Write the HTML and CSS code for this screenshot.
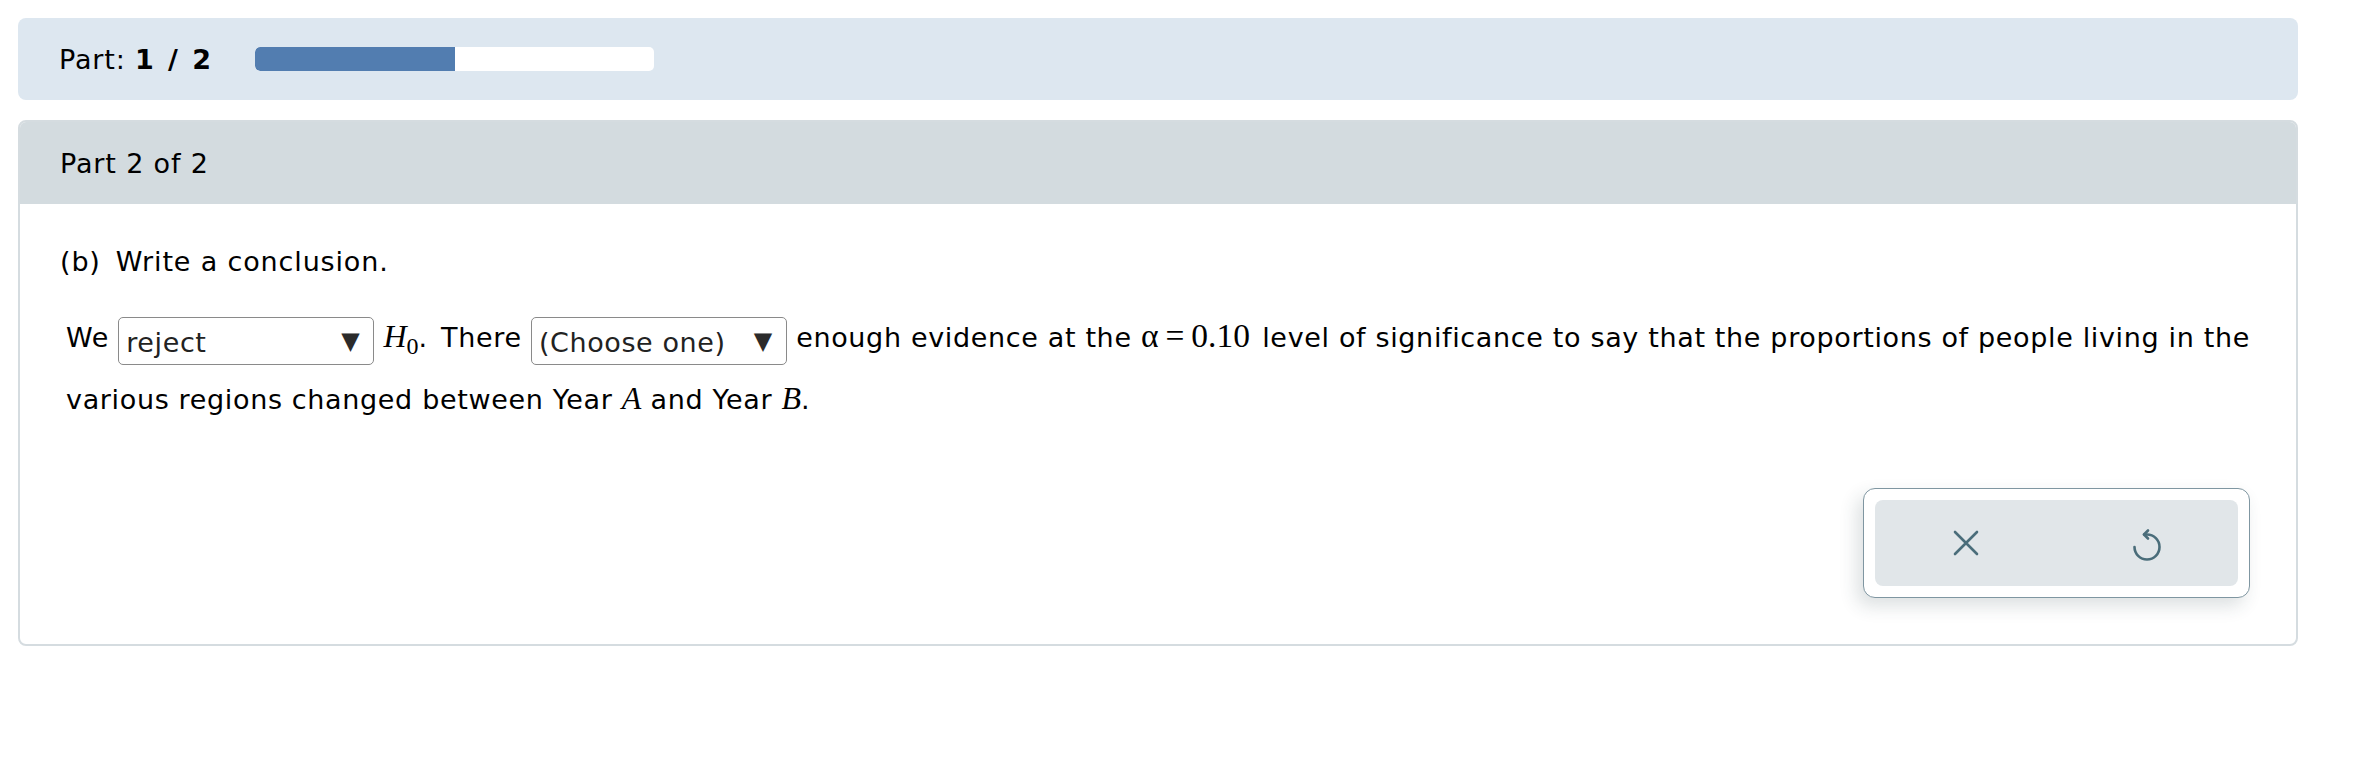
FILE: index.html
```html
<!DOCTYPE html>
<html lang="en">
<head>
<meta charset="utf-8">
<title>Part 2 of 2</title>
<link rel="stylesheet" href="styles.css">
</head>
<body>
<div class="page">
  <div class="progress-card">
    <span class="part-label">Part: <b>1 / 2</b></span>
    <div class="progress"><div class="progress-fill" style="width:50%"></div></div>
  </div>

  <div class="card">
    <div class="card-header">Part 2 of 2</div>
    <div class="card-body">
      <p class="prompt"><span class="prompt-label">(b)</span>Write a conclusion.</p>
      <p class="answer">We <span class="select"><span class="select-text">reject</span><span class="select-arrow">▼</span></span> <span class="math"><i>H</i><sub>0</sub></span><span class="punct">.</span> There <span class="select"><span class="select-text">(Choose one)</span><span class="select-arrow">▼</span></span> enough evidence at the <span class="math math-lg">α<span class="eq">=</span>0.10</span> level of significance to say that the proportions of people living in the various regions changed between Year <span class="math"><i>A</i></span> and Year <span class="math"><i>B</i></span>.</p>
      <div class="actions">
        <div class="btn-group">
          <button class="icon-btn" type="button" aria-label="Clear">
            <svg width="26" height="26" viewBox="0 0 26 26" fill="none" stroke="currentColor" stroke-width="2.6" stroke-linecap="round"><path d="M2 2 L24 24 M24 2 L2 24"/></svg>
          </button>
          <button class="icon-btn" type="button" aria-label="Undo">
            <svg width="30" height="36" viewBox="0 0 30 36" fill="none" stroke="currentColor" stroke-width="2.6" stroke-linecap="round" stroke-linejoin="round"><path d="M2.5 22 A12.5 12.5 0 1 0 15 9.5 L12 9.5"/><path d="M16 5.5 L12 9.5 L16 13.5"/></svg>
          </button>
        </div>
      </div>
    </div>
  </div>
</div>
</body>
</html>
```
FILE: styles.css
```css
html, body {
  margin: 0;
  padding: 0;
  background: #ffffff;
}

body {
  font-family: "DejaVu Sans", Verdana, sans-serif;
  font-size: 27px;
  letter-spacing: 0.65px;
  color: #000;
}

.page {
  width: 2280px;
  padding: 18px 0 0 18px;
  display: flex;
  flex-direction: column;
  gap: 20px;
}

.progress-card {
  height: 82px;
  background: #dde7f0;
  border-radius: 8px;
  display: flex;
  align-items: center;
  padding-left: 41px;
  gap: 42px;
}

.part-label {
  letter-spacing: 0.85px;
}

.part-label b {
  font-weight: bold;
  letter-spacing: 2.4px;
}

.progress {
  width: 399px;
  height: 24px;
  background: #fff;
  border-radius: 5px;
  overflow: hidden;
}

.progress-fill {
  height: 100%;
  background: #527db0;
  border-radius: 5px 0 0 5px;
}

.card {
  border: 2px solid #d5dce0;
  border-radius: 8px;
  overflow: hidden;
}

.card-header {
  height: 82px;
  background: #d3dbdf;
  display: flex;
  align-items: center;
  padding-left: 40px;
  letter-spacing: 0.85px;
}

.card-body {
  padding: 38px 20px 46px 40px;
}

.prompt {
  margin: 0;
  line-height: 40px;
  letter-spacing: 0.85px;
}

.prompt-label {
  margin-right: 15px;
}

.answer {
  margin: 24px 0 0 6px;
  line-height: 60px;
}

.select {
  display: inline-flex;
  align-items: center;
  justify-content: space-between;
  box-sizing: border-box;
  width: 256px;
  height: 48px;
  padding: 0 13px 0 7px;
  border: 1.5px solid #8a8a8a;
  border-radius: 5px;
  vertical-align: middle;
  color: #222;
  line-height: 48px;
  letter-spacing: 0.6px;
  position: relative;
  top: 1px;
}

.select-text {
  padding-top: 5px;
}

.select-arrow {
  font-size: 24px;
  color: #2b2b2b;
}

.math {
  font-family: "Liberation Serif", "Times New Roman", serif;
  font-size: 32px;
  letter-spacing: 0;
}

.math-lg {
  font-size: 33.5px;
  margin-right: 3px;
}

.math sub {
  font-size: 24px;
  vertical-align: -7px;
  line-height: 0;
}

.punct {
  margin-right: 4px;
}

.eq {
  margin: 0 7px;
}

.actions {
  display: flex;
  justify-content: flex-end;
  margin: 58px 26px 0 0;
}

.btn-group {
  box-sizing: border-box;
  width: 387px;
  height: 110px;
  padding: 11px;
  background: #fff;
  border: 1.5px solid #7f96a1;
  border-radius: 12px;
  box-shadow: -6px 8px 18px rgba(40, 60, 70, 0.16);
  display: flex;
}

.icon-btn {
  flex: 1;
  display: flex;
  align-items: center;
  justify-content: center;
  border: none;
  background: #e1e6e9;
  color: #4a6d7a;
  padding: 0;
  margin: 0;
  cursor: pointer;
}

.icon-btn:first-child {
  border-radius: 8px 0 0 8px;
}

.icon-btn:last-child {
  border-radius: 0 8px 8px 0;
}

.icon-btn svg {
  display: block;
}
```
